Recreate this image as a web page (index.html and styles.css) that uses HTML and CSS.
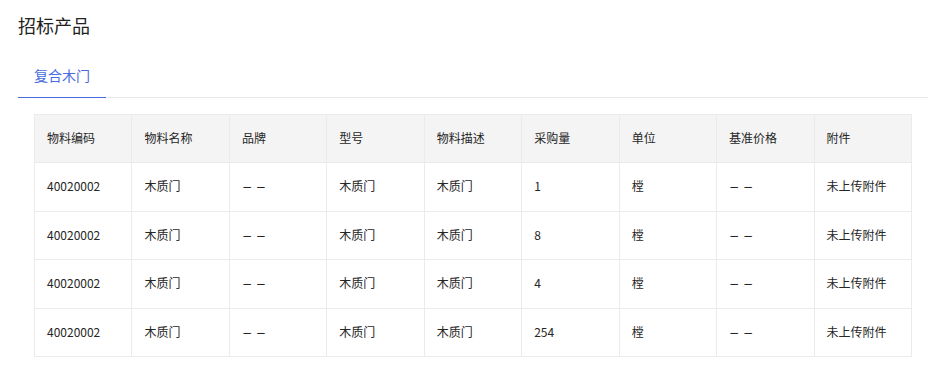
FILE: index.html
```html
<!DOCTYPE html>
<html lang="zh-CN">
<head>
<meta charset="utf-8">
<link rel="stylesheet" href="styles.css">
</head>
<body>
<div class="page">
  <h2 class="title">招标产品</h2>
  <div class="tabs">
    <div class="tab active">复合木门</div>
  </div>
  <div class="table-wrap">
    <table class="grid">
      <thead>
        <tr><th>物料编码</th><th>物料名称</th><th>品牌</th><th>型号</th><th>物料描述</th><th>采购量</th><th>单位</th><th>基准价格</th><th>附件</th></tr>
      </thead>
      <tbody>
        <tr><td>40020002</td><td>木质门</td><td><span class="dash">− −</span></td><td>木质门</td><td>木质门</td><td>1</td><td>樘</td><td><span class="dash">− −</span></td><td>未上传附件</td></tr>
        <tr><td>40020002</td><td>木质门</td><td><span class="dash">− −</span></td><td>木质门</td><td>木质门</td><td>8</td><td>樘</td><td><span class="dash">− −</span></td><td>未上传附件</td></tr>
        <tr><td>40020002</td><td>木质门</td><td><span class="dash">− −</span></td><td>木质门</td><td>木质门</td><td>4</td><td>樘</td><td><span class="dash">− −</span></td><td>未上传附件</td></tr>
        <tr><td>40020002</td><td>木质门</td><td><span class="dash">− −</span></td><td>木质门</td><td>木质门</td><td>254</td><td>樘</td><td><span class="dash">− −</span></td><td>未上传附件</td></tr>
      </tbody>
    </table>
  </div>
</div>
</body>
</html>
```
FILE: styles.css
```css
html, body {
  margin: 0;
  padding: 0;
  background: #fff;
}
body {
  font-family: "Noto Sans CJK SC", "Noto Sans", sans-serif;
  color: #333;
}
.page {
  padding: 13px 20px 0 18px;
}
.title {
  margin: 0;
  font-size: 18px;
  line-height: 24px;
  font-weight: 400;
  color: #222;
}
.tabs {
  margin-top: 23px;
  display: flex;
  border-bottom: 1px solid #e8e8e8;
}
.tab {
  width: 88px;
  box-sizing: border-box;
  padding: 5px 0 0 16px;
  font-size: 14px;
  line-height: 20px;
  height: 38px;
  color: #4a6be0;
  margin-bottom: -1px;
}
.tab.active {
  border-bottom: 1px solid #4a6be0;
}
.table-wrap {
  padding: 16px 0 0 16px;
}
.grid {
  width: 878px;
  border-collapse: collapse;
  table-layout: fixed;
  font-size: 12px;
}
.grid th, .grid td {
  border: 1px solid #ebebeb;
  text-align: left;
  padding: 0 12px 2px;
  font-weight: 400;
  color: #262626;
}
.grid th {
  height: 45px;
  background: #f4f4f4;
}
.grid td {
  height: 45.6px;
}
.dash {
  font-family: "DejaVu Sans", sans-serif;
  font-size: 12px;
}
```
